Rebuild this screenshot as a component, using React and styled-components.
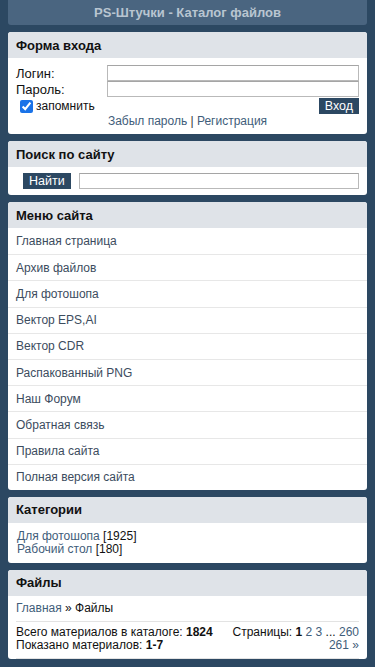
import React from 'react';
import styled, { createGlobalStyle } from 'styled-components';

const Global = createGlobalStyle`
  html, body {
    margin: 0;
    padding: 0;
    background: #2c4862;
    font-family: "Liberation Sans", Arial, sans-serif;
    font-size: 12px;
    color: #1a1a1a;
  }
`;

const Page = styled.div`
  padding: 0 8px 8px;
  display: flex;
  flex-direction: column;
  gap: 7px;
`;

const TopBar = styled.div`
  height: 25px;
  background: #4a6580;
  border-radius: 0 0 3px 3px;
  color: #b9c5d1;
  font-weight: bold;
  font-size: 13px;
  display: flex;
  align-items: center;
  justify-content: center;
`;

const Panel = styled.div`
  background: #fff;
  border-radius: 3px;
  overflow: hidden;
`;

const PanelHead = styled.div`
  height: 26px;
  background: #dfe3e8;
  font-weight: bold;
  font-size: 13px;
  color: #111;
  display: flex;
  align-items: center;
  padding: 0 8px;
`;

const LoginBody = styled.div`
  padding: 7px 8px 6px;
  display: flex;
  flex-direction: column;
`;

const FieldRow = styled.div`
  display: grid;
  grid-template-columns: 91px 1fr;
  align-items: center;
  height: 16px;
`;

const Label = styled.span`
  font-size: 13px;
  color: #111;
`;

const Input = styled.input`
  box-sizing: border-box;
  height: 16px;
  width: 100%;
  border: 1px solid #b9b9b9;
  border-top-color: #a5a5a5;
  padding: 0 3px;
  margin: 0;
  background: #fff;
`;

const RememberRow = styled.div`
  display: flex;
  align-items: center;
  justify-content: space-between;
  margin-top: 1px;
  padding-left: 4px;
`;

const Remember = styled.label`
  display: flex;
  align-items: center;
  gap: 3px;
  font-size: 12px;
  color: #111;
`;

const Check = styled.input`
  margin: 0;
  width: 13px;
  height: 13px;
  accent-color: #1a73e8;
`;

const DarkButton = styled.button`
  background: #2c4862;
  color: #fff;
  border: none;
  font-family: "Liberation Sans", Arial, sans-serif;
  font-size: 12.5px;
  height: 16px;
  padding: 0 ${p => p.px || 6}px;
  line-height: 16px;
  margin: 0;
  flex: none;
`;

const LinksLine = styled.div`
  text-align: center;
  font-size: 12px;
  line-height: 14px;
  color: #333;
`;

const Link = styled.a`
  color: #3f5d7a;
  text-decoration: none;
`;

const SearchBody = styled.div`
  display: flex;
  align-items: center;
  gap: 8px;
  padding: 6px 8px 6px 15px;
`;

const MenuItem = styled.div`
  height: 26.2px;
  border-top: ${p => (p.first ? 'none' : '1px solid #e7e7e7')};
  box-sizing: border-box;
  display: flex;
  align-items: center;
  padding: 0 8px;
  font-size: 12px;
  color: #3c4c5e;
`;

const CatBody = styled.div`
  padding: 7px 9px;
  display: flex;
  flex-direction: column;
  line-height: 13px;
  font-size: 12px;
  color: #111;
`;

const FilesBody = styled.div`
  padding: 0 8px;
  font-size: 12px;
  color: #111;
`;

const Crumb = styled.div`
  height: 25px;
  display: flex;
  align-items: center;
  border-bottom: 1px solid #e3e3e3;
`;

const Stats = styled.div`
  display: flex;
  justify-content: space-between;
  padding: 4px 0 5px;
  line-height: 13.5px;
  border-bottom: 1px solid #e3e3e3;
`;

const Pages = styled.div`
  text-align: right;
  width: 128px;
  flex: none;
`;

const menu = [
  'Главная страница',
  'Архив файлов',
  'Для фотошопа',
  'Вектор EPS,AI',
  'Вектор CDR',
  'Распакованный PNG',
  'Наш Форум',
  'Обратная связь',
  'Правила сайта',
  'Полная версия сайта',
];

export default function App() {
  return (
    <>
      <Global />
      <Page>
        <TopBar>PS-Штучки - Каталог файлов</TopBar>

        <Panel>
          <PanelHead>Форма входа</PanelHead>
          <LoginBody>
            <FieldRow>
              <Label>Логин:</Label>
              <Input />
            </FieldRow>
            <FieldRow>
              <Label>Пароль:</Label>
              <Input type="password" />
            </FieldRow>
            <RememberRow>
              <Remember>
                <Check type="checkbox" defaultChecked />
                запомнить
              </Remember>
              <DarkButton>Вход</DarkButton>
            </RememberRow>
            <LinksLine>
              <Link href="#">Забыл пароль</Link> | <Link href="#">Регистрация</Link>
            </LinksLine>
          </LoginBody>
        </Panel>

        <Panel>
          <PanelHead>Поиск по сайту</PanelHead>
          <SearchBody>
            <DarkButton px={6}>Найти</DarkButton>
            <Input />
          </SearchBody>
        </Panel>

        <Panel>
          <PanelHead>Меню сайта</PanelHead>
          {menu.map((m, i) => (
            <MenuItem key={m} first={i === 0}>{m}</MenuItem>
          ))}
        </Panel>

        <Panel>
          <PanelHead>Категории</PanelHead>
          <CatBody>
            <span><Link href="#">Для фотошопа</Link> [1925]</span>
            <span><Link href="#">Рабочий стол</Link> [180]</span>
          </CatBody>
        </Panel>

        <Panel>
          <PanelHead>Файлы</PanelHead>
          <FilesBody>
            <Crumb>
              <Link href="#">Главная</Link>&nbsp;» Файлы
            </Crumb>
            <Stats>
              <div>
                Всего материалов в каталоге: <b>1824</b>
                <br />
                Показано материалов: <b>1-7</b>
              </div>
              <Pages>
                Страницы: <b>1</b> <Link href="#">2</Link> <Link href="#">3</Link> ...{' '}
                <Link href="#">260</Link> <Link href="#">261</Link> <Link href="#">»</Link>
              </Pages>
            </Stats>
          </FilesBody>
        </Panel>
      </Page>
    </>
  );
}
